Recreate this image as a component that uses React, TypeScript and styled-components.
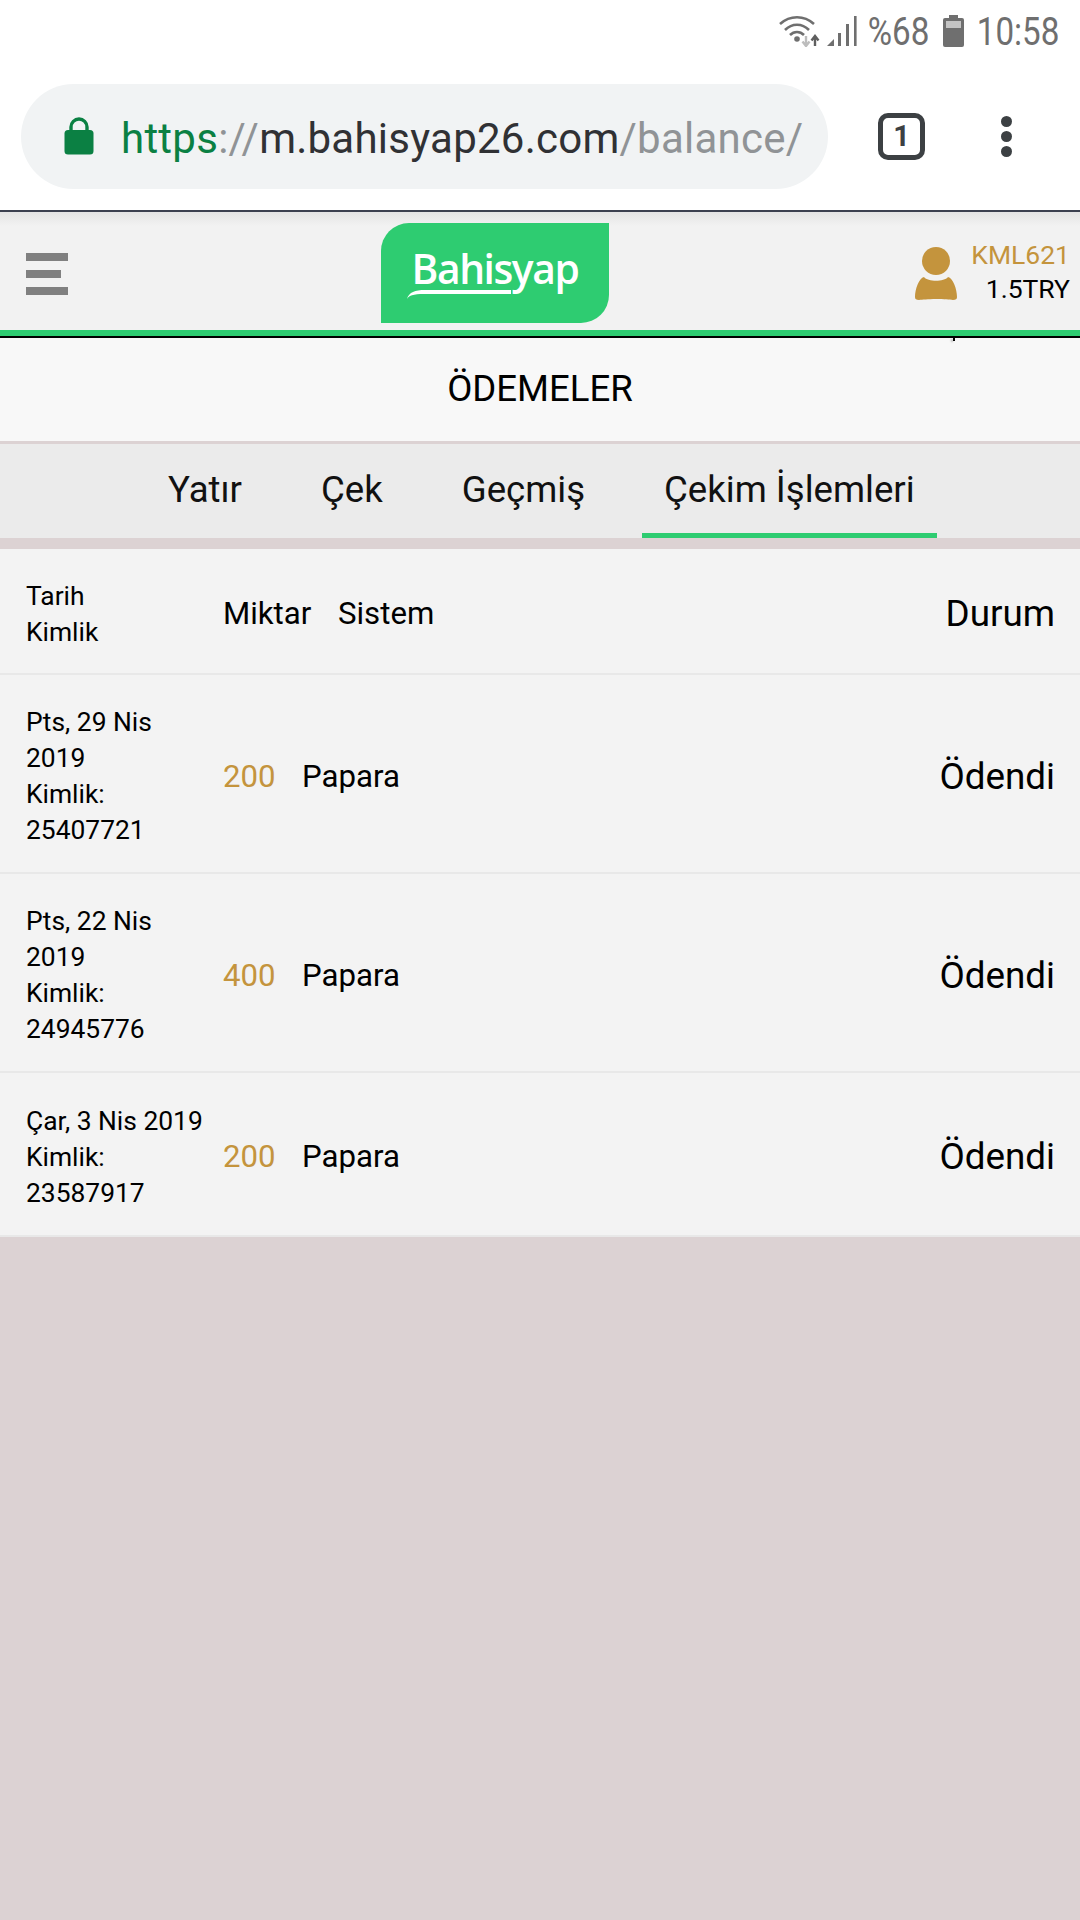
import React from 'react';
import styled, { createGlobalStyle } from 'styled-components';

type Payout = {
  date: string;
  id: string;
  amount: number;
};

const payouts: Payout[] = [
  { date: 'Pts, 29 Nis 2019', id: '25407721', amount: 200 },
  { date: 'Pts, 22 Nis 2019', id: '24945776', amount: 400 },
  { date: 'Çar, 3 Nis 2019', id: '23587917', amount: 200 },
];

const tabs = ['Yatır', 'Çek', 'Geçmiş', 'Çekim İşlemleri'];

const WifiIcon = () => (
  <svg width="42" height="32" viewBox="0 0 42 32" fill="none">
    <path d="M1 9 C11 0 25 0 35 9" stroke="#6f6f6f" strokeWidth="2.6" />
    <path d="M6 15 C13 8 23 8 30 15" stroke="#6f6f6f" strokeWidth="2.6" />
    <path d="M11 20 C15 16 21 16 25 20" stroke="#6f6f6f" strokeWidth="2.6" />
    <circle cx="18" cy="24" r="2.8" fill="#6f6f6f" />
    <path d="M27 21 V30 M23.5 26.5 L27 31 L30.5 26.5" stroke="#bdbdbd" strokeWidth="2.4" />
    <path d="M36 31 V22 M32.5 25.5 L36 21 L39.5 25.5" stroke="#5f5f5f" strokeWidth="2.4" />
  </svg>
);

const SignalIcon = () => (
  <svg width="31" height="32" viewBox="0 0 31 32" fill="#6f6f6f">
    <path d="M0 31 L7 24 V31 Z" />
    <rect x="11" y="18" width="3" height="13" />
    <rect x="19" y="9" width="3" height="22" />
    <rect x="27" y="1" width="2.6" height="30" />
  </svg>
);

const BatteryIcon = () => (
  <svg width="21" height="32" viewBox="0 0 21 32">
    <rect x="6" y="0" width="9" height="4" fill="#6f6f6f" />
    <rect x="0" y="3" width="21" height="29" rx="2" fill="#6f6f6f" />
    <rect x="3" y="6" width="15" height="7" fill="#c4c4c4" />
  </svg>
);

const LockIcon = () => (
  <svg width="30" height="38" viewBox="0 0 30 38">
    <path d="M7 17 V10 a8 8 0 0 1 16 0 V17" fill="none" stroke="#0b8043" strokeWidth="3.4" />
    <rect x="0.5" y="13" width="29" height="24.5" rx="3.5" fill="#0b8043" />
  </svg>
);

const UserIcon = () => (
  <svg width="42" height="54" viewBox="0 0 42 54" fill="#c4943d">
    <circle cx="21" cy="14" r="14" />
    <path d="M9 30 C13 35 29 35 33 30 C38 31 42 42 42 50 C42 55 36 52 21 52 C6 52 0 55 0 50 C0 42 4 31 9 30 Z" />
  </svg>
);

const Swoosh = () => (
  <svg width="105" height="10" viewBox="0 0 105 10">
    <path d="M0 10 C2 3 8 1 18 1 H104 V5 H20 C10 5 3 5 0 10 Z" fill="#fff" />
  </svg>
);

export default function App() {
  return (
    <>
      <GlobalStyle />
      <Page>
        <StatusBar>
          <WifiIcon />
          <SignalIcon />
          <StatusText $pull={15}>%68</StatusText>
          <BatteryIcon />
          <StatusText $pull={16}>10:58</StatusText>
        </StatusBar>

        <BrowserBar>
          <UrlPill>
            <LockIcon />
            <UrlText>
              <Scheme>https</Scheme>
              <Muted>://</Muted>
              <span>m.bahisyap26.com</span>
              <Muted>/balance/</Muted>
            </UrlText>
          </UrlPill>
          <TabCount>1</TabCount>
          <MenuDots>
            <i />
            <i />
            <i />
          </MenuDots>
        </BrowserBar>

        <SiteHeader>
          <Burger>
            <BurgerLine />
            <BurgerLine $short />
            <BurgerLine />
          </Burger>
          <Logo>
            <LogoText>Bahisyap</LogoText>
            <LogoSwoosh>
              <Swoosh />
            </LogoSwoosh>
          </Logo>
          <Account>
            <UserIcon />
            <AccountText>
              <AccountName>KML621</AccountName>
              <AccountBalance>1.5TRY</AccountBalance>
            </AccountText>
          </Account>
        </SiteHeader>

        <Title>ÖDEMELER</Title>

        <TabBar>
          {tabs.map((tab, index) => (
            <Tab key={tab} $active={index === tabs.length - 1}>
              {tab}
            </Tab>
          ))}
        </TabBar>

        <Table>
          <HeadRow>
            <DateCell>
              Tarih
              <br />
              Kimlik
            </DateCell>
            <HeadAmount>Miktar</HeadAmount>
            <HeadSystem>Sistem</HeadSystem>
            <Status>Durum</Status>
          </HeadRow>
          {payouts.map((payout) => (
            <Row key={payout.id}>
              <DateCell>
                {payout.date}
                <br />
                Kimlik: {payout.id}
              </DateCell>
              <Amount>{payout.amount}</Amount>
              <System>Papara</System>
              <Status>Ödendi</Status>
            </Row>
          ))}
        </Table>
      </Page>
    </>
  );
}

const GlobalStyle = createGlobalStyle`
  html, body {
    margin: 0;
    padding: 0;
    background: #dcd2d3;
    font-family: Roboto, "Noto Sans", sans-serif;
    color: #000;
  }
`;

const Page = styled.div`
  width: 1080px;
  height: 1920px;
  overflow: hidden;
  background: #dcd2d3;
`;

const StatusBar = styled.div`
  height: 62px;
  padding-right: 21px;
  background: #fff;
  display: flex;
  align-items: center;
  justify-content: flex-end;
  gap: 13px;

  svg:first-child {
    margin-right: -7px;
  }
`;

const StatusText = styled.span<{ $pull: number }>`
  margin-left: -${({ $pull }) => $pull}px;
  font-size: 39.5px;
  color: #6f6f6f;
  transform: scaleX(0.84);
  transform-origin: right center;
`;

const BrowserBar = styled.div`
  height: 150px;
  padding: 0 0 0 21px;
  box-sizing: border-box;
  background: #fff;
  border-bottom: 2px solid #3c4150;
  display: flex;
  align-items: center;
`;

const UrlPill = styled.div`
  width: 807px;
  height: 105px;
  border-radius: 53px;
  background: #f1f3f4;
  padding-left: 43px;
  box-sizing: border-box;
  display: flex;
  align-items: center;
  gap: 27px;
`;

const UrlText = styled.div`
  padding-top: 4px;
  font-size: 42px;
  letter-spacing: 0.25px;
  color: #303134;
  white-space: nowrap;
`;

const Scheme = styled.span`
  color: #0b8043;
`;

const Muted = styled.span`
  color: #909396;
`;

const TabCount = styled.div`
  width: 47px;
  height: 47px;
  margin-left: 50px;
  border: 5px solid #3c4043;
  border-radius: 10px;
  box-sizing: border-box;
  font-size: 29px;
  font-weight: 700;
  color: #3c4043;
  display: flex;
  align-items: center;
  justify-content: center;
`;

const MenuDots = styled.div`
  margin-left: 76px;
  display: flex;
  flex-direction: column;
  gap: 4px;

  i {
    width: 11px;
    height: 11px;
    border-radius: 50%;
    background: #3c4043;
  }
`;

const SiteHeader = styled.div`
  height: 124px;
  margin-bottom: 2px;
  padding-top: 11px;
  box-sizing: border-box;
  background: linear-gradient(#e4e4e4, #f2f2f2 14px);
  border-bottom: 6px solid #2ecc71;
  box-shadow: 0 2px 0 #000;
  display: flex;
  align-items: flex-start;
`;

const Burger = styled.div`
  width: 381px;
  padding: 30px 0 0 26px;
  box-sizing: border-box;
  display: flex;
  flex-direction: column;
  gap: 9px;
`;

const BurgerLine = styled.div<{ $short?: boolean }>`
  width: ${({ $short }) => ($short ? 35 : 42)}px;
  height: 8px;
  background: #808080;
`;

const Logo = styled.div`
  position: relative;
  width: 228px;
  height: 100px;
  background: #2ecc71;
  border-radius: 28px 0 28px 0;
  display: flex;
  justify-content: center;
`;

const LogoText = styled.div`
  margin-top: 20px;
  font-family: "Open Sans", sans-serif;
  font-size: 42px;
  font-weight: 600;
  line-height: 50px;
  letter-spacing: -1.5px;
  color: #fff;
  transform: scaleX(0.97);
`;

const LogoSwoosh = styled.div`
  position: absolute;
  left: 26px;
  top: 66px;
  line-height: 0;
`;

const Account = styled.div`
  position: relative;
  margin-left: auto;
  padding: 24px 10px 0 0;
  display: flex;
  align-items: flex-start;
  gap: 14px;

  &::after {
    content: '';
    position: absolute;
    top: 115px;
    right: 125px;
    width: 2px;
    height: 3px;
    background: #000;
    box-shadow: -2px 1px 2px rgba(0, 0, 0, 0.25);
  }
`;

const AccountText = styled.div`
  margin-top: -9px;
  text-align: right;
  font-size: 26.5px;
  line-height: 34px;
`;

const AccountName = styled.div`
  color: #c4943d;
`;

const AccountBalance = styled.div`
  color: #000;
`;

const Title = styled.div`
  height: 101px;
  padding-bottom: 2px;
  background: #f8f8f8;
  border-bottom: 3px solid #dcd2d3;
  font-size: 36.6px;
  display: flex;
  align-items: center;
  justify-content: center;
`;

const TabBar = styled.div`
  height: 105px;
  box-sizing: border-box;
  background: #ebebeb;
  border-bottom: 11px solid #dcd2d3;
  padding-left: 146px;
  display: flex;
`;

const Tab = styled.div<{ $active?: boolean }>`
  height: 94px;
  padding: 2px 22px 0;
  margin-right: 35px;
  box-sizing: border-box;
  font-size: 36.6px;
  color: #111;
  display: flex;
  align-items: center;
  border-bottom: 5px solid ${({ $active }) => ($active ? '#2ecc71' : 'transparent')};
`;

const Table = styled.div`
  background: #f3f3f3;
`;

const Row = styled.div`
  min-height: 164px;
  padding: 29px 25px 24px 26px;
  box-sizing: border-box;
  display: flex;
  align-items: center;
  border-bottom: 2px solid #e8e8e8;
  color: #000;
`;

const HeadRow = styled(Row)`
  min-height: 126px;
  padding-top: 5px;
  padding-bottom: 0;
`;

const DateCell = styled.div`
  width: 180px;
  margin-right: 17px;
  flex-shrink: 0;
  font-size: 26.4px;
  line-height: 36px;
`;

const HeadAmount = styled.div`
  width: 115px;
  font-size: 31.2px;
`;

const HeadSystem = styled.div`
  font-size: 31.2px;
`;

const Amount = styled.div`
  width: 79px;
  font-size: 31.2px;
  color: #c4943d;
`;

const System = styled.div`
  font-size: 31.2px;
`;

const Status = styled.div`
  margin-left: auto;
  font-size: 36.8px;
`;
